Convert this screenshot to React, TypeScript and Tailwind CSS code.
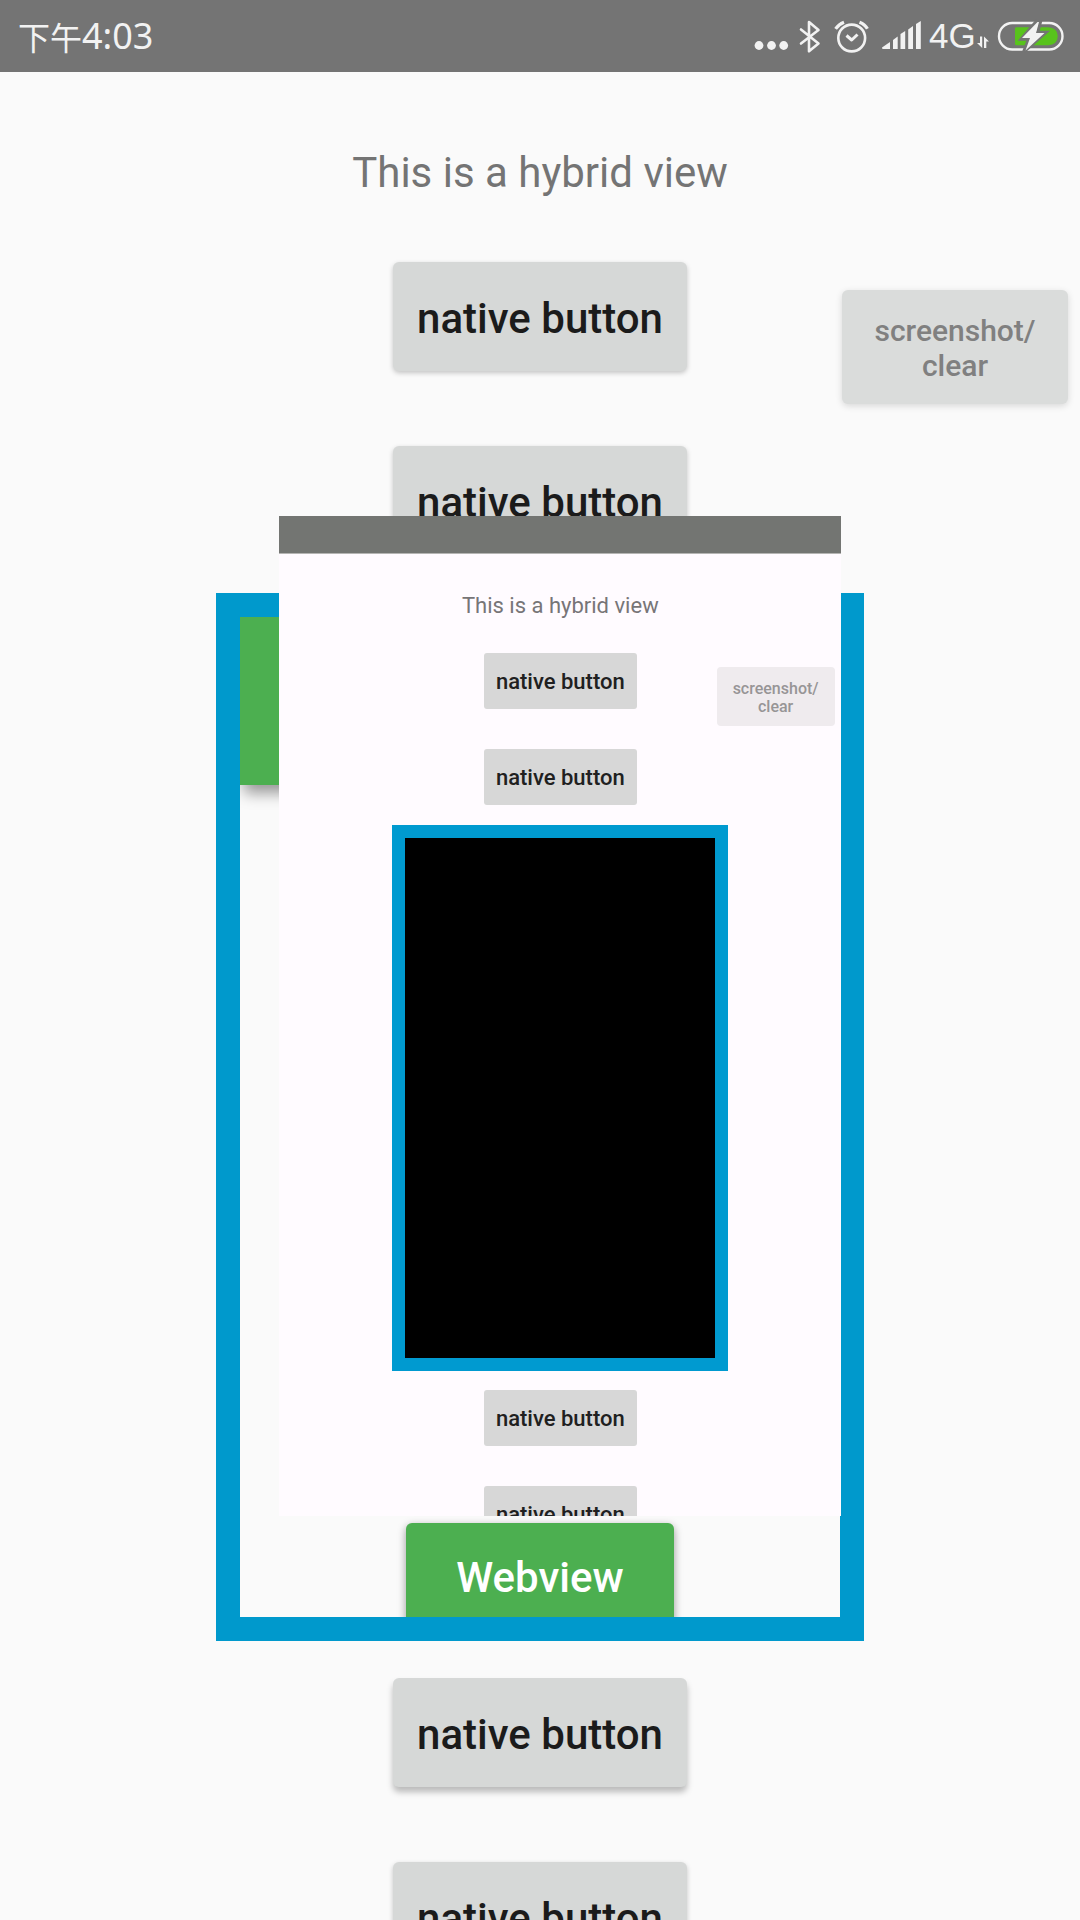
import React from "react";

function StatusIcons() {
  return (
    <div className="flex h-full items-center text-[#f2f2f2]">
      <svg className="h-[72px] w-9" viewBox="753 0 36 72" fill="currentColor" aria-label="More notifications">
        <circle cx="759" cy="45.5" r="4.4" />
        <circle cx="771.5" cy="45.5" r="4.4" />
        <circle cx="783.7" cy="45.5" r="4.4" />
      </svg>
      <svg className="ml-2 h-[72px] w-6" viewBox="797 0 24 72" fill="none" stroke="currentColor" strokeWidth="2.6" strokeLinejoin="round" strokeLinecap="round" aria-label="Bluetooth">
        <path d="M801 29.5 L818.5 43.5 L809 51.3 V22 L818.5 30 L801 43.5" />
      </svg>
      <svg className="ml-3 h-[72px] w-9" viewBox="833 0 36 72" fill="none" stroke="currentColor" strokeWidth="2.6" strokeLinejoin="round" aria-label="Alarm">
        <circle cx="851.7" cy="38" r="13.4" />
        <path d="M846.5 35.5 L851.7 40 L857.5 34.5" strokeWidth="3" />
        <path d="M835.6 28.8 Q838.5 24.5 844 22.3 M859.5 22.3 Q865 24.5 867.4 28.8" strokeWidth="3.2" />
      </svg>
      <svg className="ml-3 h-[72px] w-10" viewBox="881 0 40 72" fill="currentColor" aria-label="Signal">
        <path d="M882 47.5 L890 42 V49 H883 Q882 49 882 47.5Z" />
        <path d="M893 40 L897.7 36.5 V49 H893Z" />
        <path d="M900.5 34 L905.2 31 V49 H900.5Z" />
        <path d="M908.2 29.5 L913 26 V49 H908.2Z" />
        <path d="M916 24 L920.8 21 V49 H916Z" />
      </svg>
      <span className="ml-2 w-12 font-['Liberation_Sans'] text-[35px] leading-10">4G</span>
      <svg className="h-[72px] w-3" viewBox="977 0 12 72" fill="currentColor" aria-label="Data transfer">
        <path d="M980 36.5 H982.2 V48 L977 43 H980Z M984 36.5 L989 41.5 H986.3 V48 H984Z" />
      </svg>
      <svg className="ml-2 h-[72px] w-[68px]" viewBox="997 0 68 72" aria-label="Battery charging">
        <rect x="999" y="23" width="63.5" height="26.5" rx="13.2" fill="none" stroke="currentColor" strokeWidth="2.4" />
        <path d="M1016.5 27.3 H1048 Q1057.500 27.800 1057.800 36 Q1057.500 44.800 1048 45.300 H1016.500 Q1015 45.300 1015 44 V28.500 Q1015 27.300 1016.500 27.300Z" fill="#58c31c" />
        <path d="M1037 21 L1021.500 39 H1029 L1024 51.500 L1045.500 32.500 H1037.500 L1040.500 21Z" fill="currentColor" stroke="#747474" strokeWidth="3.5" />
        <path d="M1037.500 22 L1022 38 H1030 L1025.500 50.500 L1044.500 33 H1036 L1039 22Z" fill="currentColor" />
      </svg>
    </div>
  );
}

function NativeButton({ raised = false }: { raised?: boolean }) {
  return (
    <button
      type="button"
      className={
        "h-[109px] shrink-0 rounded-md bg-[#d6d8d7] px-6 pt-1 text-[42px] leading-[50px] font-medium text-[#1b1b1b] " +
        (raised ? "shadow-[0_5px_6px_rgba(0,0,0,0.26)]" : "shadow-[0_2px_5px_rgba(0,0,0,0.22)]")
      }
    >
      native button
    </button>
  );
}

function SmallButton() {
  return (
    <button type="button" className="h-14 shrink-0 rounded-[3px] bg-[#d7d7d7] px-3 pt-0.5 text-[22px] leading-7 font-medium text-[#202020]">
      native button
    </button>
  );
}

function Preview() {
  return (
    <section aria-label="Captured view" className="absolute top-[516px] left-[279px] h-[1000px] w-[52%] overflow-hidden bg-[#fffbff]">
      <div className="h-[38px] border-b border-[#b5b5b3] bg-[#737572]" />
      <div className="flex flex-col items-center pl-px">
        <p className="mt-9 text-[22px] leading-8 text-[#777577]">This is a hybrid view</p>
        <div className="mt-[31px] flex flex-col items-center gap-10">
          <SmallButton />
          <SmallButton />
        </div>
        <div className="mt-5 h-[546px] w-[60%] border-[13px] border-[#009ad0] bg-black" />
        <div className="mt-[19px] flex flex-col items-center gap-10">
          <SmallButton />
          <SmallButton />
        </div>
      </div>
      <button type="button" className="absolute top-[151px] right-1.5 h-[59px] w-[118px] rounded bg-[#efebee] pt-0.5 text-base leading-[18px] font-medium text-[#979596]">
        screenshot/
        <br />
        clear
      </button>
    </section>
  );
}

export default function App() {
  return (
    <div className="relative flex h-screen flex-col overflow-hidden bg-[#fafafa] font-['Roboto',sans-serif]">
      <header className="flex h-[72px] shrink-0 items-center justify-between bg-[#747474] pr-[15px] pl-[18px]">
        <time className="flex items-center text-[#f2f2f2]">
          <span className="font-['Noto_Sans_CJK_SC',sans-serif] text-[32px] leading-10">下午</span>
          <span className="font-['Noto_Sans',sans-serif] text-[36px] leading-10">4:03</span>
        </time>
        <StatusIcons />
      </header>
      <main className="flex flex-col items-center">
        <h1 className="mt-[76px] text-[42px] leading-[50px] text-[#747474]">This is a hybrid view</h1>
        <div className="mt-16 flex flex-col items-center gap-[75px]">
          <NativeButton />
          <NativeButton />
        </div>
        <section aria-label="Webview" className="mt-[38px] flex h-[1048px] w-[60%] shrink-0 flex-col items-center justify-between overflow-hidden border-[24px] border-[#0099cc] bg-[#fafafa]">
          <div className="h-[168px] w-full shrink-0 bg-[#4caf50] shadow-[4px_8px_14px_rgba(0,0,0,0.4)]" />
          <div className="h-[94px]">
            <button type="button" className="h-[109px] rounded-md bg-[#4caf50] px-[50px] text-[42px] leading-[50px] font-medium text-white shadow-[0_3px_8px_rgba(0,0,0,0.4)]">
              Webview
            </button>
          </div>
        </section>
        <div className="mt-[37px] flex flex-col items-center gap-[75px]">
          <NativeButton raised />
          <NativeButton />
        </div>
      </main>
      <button type="button" className="absolute top-[290px] right-3 h-[114px] w-[226px] rounded-md bg-[#dadcdb] pt-0.5 text-[30px] leading-[35px] font-medium text-[#808080] shadow-[0_2px_7px_rgba(0,0,0,0.14)]">
        screenshot/
        <br />
        clear
      </button>
      <Preview />
    </div>
  );
}
